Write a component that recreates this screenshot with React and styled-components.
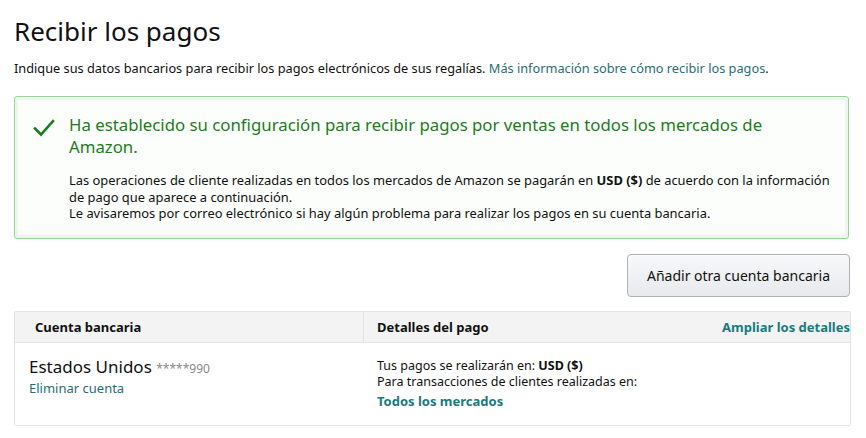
import React from 'react';
import styled, { createGlobalStyle } from 'styled-components';

const GlobalStyle = createGlobalStyle`
  html, body {
    margin: 0;
    padding: 0;
    background: #fff;
  }
  body {
    font-family: "Noto Sans", "Liberation Sans", Arial, sans-serif;
    color: #111;
    font-size: 13px;
  }
`;

const Page = styled.div`
  width: 866px;
  height: 438px;
  box-sizing: border-box;
  padding: 14px 17px 0 14px;
  overflow: hidden;
`;

const Title = styled.h1`
  margin: 0;
  font-size: 26px;
  font-weight: 400;
  line-height: 34px;
  color: #111;
`;

const Intro = styled.p`
  margin: 11px 0 0;
  font-size: 12.75px;
  line-height: 19px;
  color: #111;
`;

const Link = styled.a`
  color: ${(p) => (p.$bold ? '#1a7a7e' : '#2a6e75')};
  font-weight: ${(p) => (p.$bold ? 700 : 400)};
  text-decoration: none;
  cursor: pointer;
`;

const Alert = styled.div`
  margin-top: 18px;
  border: 1px solid #9ad39a;
  border-radius: 3px;
  box-shadow: inset 0 0 0 3px #eaf7ea;
  background: #fbfefb;
  padding: 17px 8px 16px 18px;
  display: flex;
  gap: 14px;
`;

const CheckIcon = styled.svg`
  flex: none;
  width: 22px;
  height: 20px;
  margin-top: 4px;
`;

const AlertBody = styled.div`
  flex: 1;
`;

const AlertHeading = styled.div`
  font-size: 16.8px;
  line-height: 22px;
  color: #1e7b1e;
  padding-right: 12px;
`;

const AlertText = styled.p`
  margin: 14px 0 0;
  font-size: 12.9px;
  line-height: 16.5px;
  color: #111;
`;

const Actions = styled.div`
  display: flex;
  justify-content: flex-end;
  margin: 15px -1px 0 0;
`;

const Button = styled.button`
  width: 223px;
  height: 43px;
  border: 1px solid #adb1b8;
  border-radius: 4px;
  background: linear-gradient(#f7f8fa, #e7e9ec);
  box-shadow: inset 0 1px 0 rgba(255, 255, 255, 0.6);
  font-family: inherit;
  font-size: 14px;
  color: #111;
  cursor: pointer;
`;

const Table = styled.div`
  margin-top: 14px;
  width: 835px;
  border: 1px solid #e3e3e3;
  border-radius: 2px;
`;

const Row = styled.div`
  display: grid;
  grid-template-columns: 348px 1fr;
  background: ${(p) => (p.$head ? '#f3f3f3' : '#fff')};
  border-bottom: ${(p) => (p.$head ? '1px solid #e3e3e3' : 'none')};
`;

const HeadCell = styled.div`
  height: 30px;
  display: flex;
  align-items: center;
  justify-content: space-between;
  padding: 0 0 0 ${(p) => p.$pad}px;
  font-weight: 700;
  font-size: 13px;
  color: #111;
  border-left: ${(p) => (p.$divider ? '1px solid #e3e3e3' : 'none')};
`;

const Cell = styled.div`
  padding: ${(p) => p.$pad};
  height: 82px;
  box-sizing: border-box;
`;

const Country = styled.div`
  font-size: 17px;
  line-height: 22px;
  color: #111;
`;

const Masked = styled.span`
  font-size: 12px;
  color: #888;
`;

const Line = styled.div`
  font-size: 12.5px;
  line-height: 16px;
  color: #111;
`;

const Spaced = styled.div`
  margin-top: ${(p) => p.$top}px;
  font-size: 13px;
  line-height: 18px;
`;

export default function App() {
  return (
    <>
      <GlobalStyle />
      <Page>
        <Title>Recibir los pagos</Title>
        <Intro>
          Indique sus datos bancarios para recibir los pagos electrónicos de sus regalías.{' '}
          <Link>Más información sobre cómo recibir los pagos</Link>.
        </Intro>

        <Alert>
          <CheckIcon viewBox="0 0 22 20">
            <path d="M2 10.5 L8 16.5 L20 3" fill="none" stroke="#1e7b1e" strokeWidth="2.6" strokeLinecap="square" />
          </CheckIcon>
          <AlertBody>
            <AlertHeading>
              Ha establecido su configuración para recibir pagos por ventas en todos los mercados de Amazon.
            </AlertHeading>
            <AlertText>
              Las operaciones de cliente realizadas en todos los mercados de Amazon se pagarán en <b>USD ($)</b> de
              acuerdo con la información de pago que aparece a continuación.
              <br />
              Le avisaremos por correo electrónico si hay algún problema para realizar los pagos en su cuenta bancaria.
            </AlertText>
          </AlertBody>
        </Alert>

        <Actions>
          <Button>Añadir otra cuenta bancaria</Button>
        </Actions>

        <Table>
          <Row $head>
            <HeadCell $pad={20}>Cuenta bancaria</HeadCell>
            <HeadCell $pad={13} $divider>
              Detalles del pago
              <Link $bold>Ampliar los detalles</Link>
            </HeadCell>
          </Row>
          <Row>
            <Cell $pad="13px 0 0 14px">
              <Country>
                Estados Unidos <Masked>*****990</Masked>
              </Country>
              <Spaced $top={-1}>
                <Link>Eliminar cuenta</Link>
              </Spaced>
            </Cell>
            <Cell $pad="15px 0 0 14px">
              <Line>
                Tus pagos se realizarán en: <b>USD ($)</b>
              </Line>
              <Line>Para transacciones de clientes realizadas en:</Line>
              <Spaced $top={2}>
                <Link $bold>Todos los mercados</Link>
              </Spaced>
            </Cell>
          </Row>
        </Table>
      </Page>
    </>
  );
}
